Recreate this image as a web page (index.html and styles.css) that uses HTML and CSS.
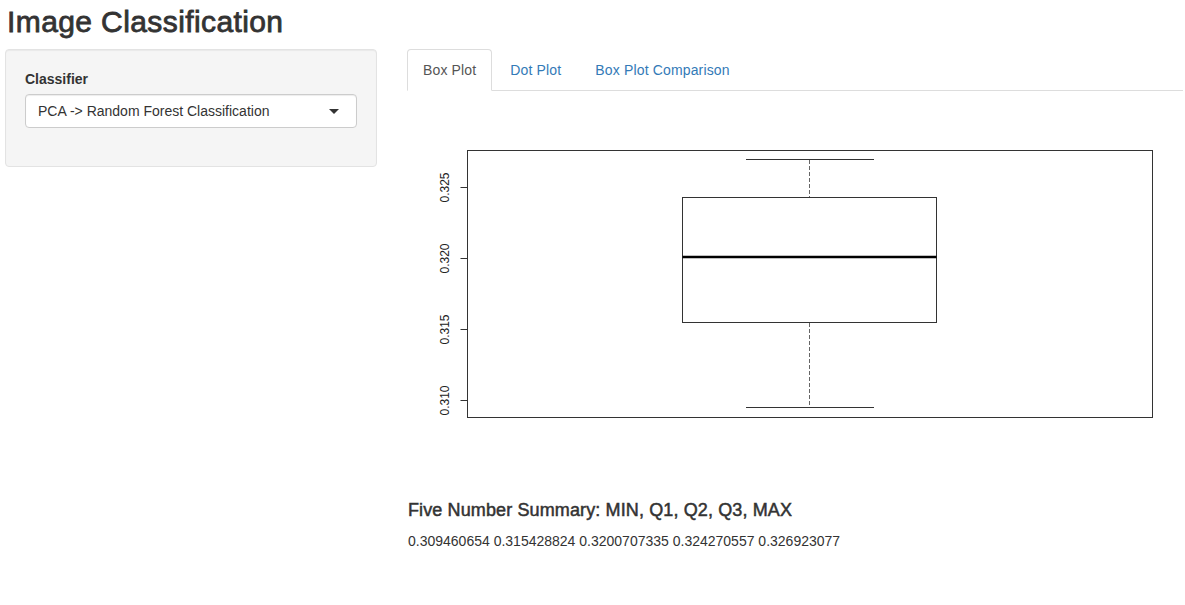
FILE: index.html
```html
<!DOCTYPE html>
<html lang="en">
<head>
<meta charset="utf-8">
<title>Image Classification</title>
<link rel="stylesheet" href="styles.css">
</head>
<body>
<div class="page">
  <h2 class="title">Image Classification</h2>
  <div class="layout">
    <aside class="well">
      <div class="form-group">
        <label class="control-label">Classifier</label>
        <div class="select">
          <span class="select-value">PCA -&gt; Random Forest Classification</span>
          <span class="caret"></span>
        </div>
      </div>
    </aside>
    <main class="main">
      <ul class="nav-tabs">
        <li class="tab active"><a>Box Plot</a></li>
        <li class="tab"><a>Dot Plot</a></li>
        <li class="tab"><a>Box Plot Comparison</a></li>
      </ul>
      <div class="tab-content">
        <svg class="plot" width="775" height="400" viewBox="0 0 775 400" xmlns="http://www.w3.org/2000/svg">
          <rect x="59.5" y="59.5" width="685" height="267" fill="none" stroke="#333" stroke-width="1"/>
          <g stroke="#333" stroke-width="1">
            <line x1="59.5" y1="96.5" x2="59.5" y2="309.5"/>
            <line x1="52.5" y1="96.5" x2="59.5" y2="96.5"/>
            <line x1="52.5" y1="167.5" x2="59.5" y2="167.5"/>
            <line x1="52.5" y1="238.5" x2="59.5" y2="238.5"/>
            <line x1="52.5" y1="309.5" x2="59.5" y2="309.5"/>
          </g>
          <g class="tick-labels" font-size="12" fill="#222" text-anchor="middle">
            <text transform="translate(41 96.5) rotate(-90)">0.325</text>
            <text transform="translate(41 167.5) rotate(-90)">0.320</text>
            <text transform="translate(41 238.5) rotate(-90)">0.315</text>
            <text transform="translate(41 309.5) rotate(-90)">0.310</text>
          </g>
          <g stroke="#666" stroke-width="1" stroke-dasharray="4 2">
            <line x1="401.5" y1="69" x2="401.5" y2="106"/>
            <line x1="401.5" y1="232" x2="401.5" y2="316"/>
          </g>
          <g stroke="#333" stroke-width="1">
            <line x1="338" y1="68.5" x2="466" y2="68.5"/>
            <line x1="338" y1="316.5" x2="466" y2="316.5"/>
            <rect x="274.5" y="106.5" width="254" height="125" fill="#fff"/>
          </g>
          <line x1="274.5" y1="166" x2="528.5" y2="166" stroke="#000" stroke-width="2.5"/>
        </svg>
        <h4 class="summary-title">Five Number Summary: MIN, Q1, Q2, Q3, MAX</h4>
        <div class="summary-values">0.309460654 0.315428824 0.3200707335 0.324270557 0.326923077</div>
      </div>
    </main>
  </div>
</div>
</body>
</html>
```
FILE: styles.css
```css
* { box-sizing: border-box; }

html, body {
  margin: 0;
  padding: 0;
  background: #fff;
}

body {
  font-family: "Liberation Sans", Helvetica, Arial, sans-serif;
  font-size: 14px;
  line-height: 20px;
  color: #333;
}

.page {
  padding: 0 3px 0 5px;
}

.title {
  margin: 5px 0 11px 2px;
  font-size: 30px;
  line-height: 33px;
  font-weight: 500;
  letter-spacing: 0.4px;
  -webkit-text-stroke: 0.8px #333;
  color: #333;
}

.layout {
  display: grid;
  grid-template-columns: 372px 1fr;
  column-gap: 31px;
  align-items: start;
}

.well {
  background: #f5f5f5;
  border: 1px solid #e3e3e3;
  border-radius: 4px;
  box-shadow: inset 0 1px 1px rgba(0, 0, 0, 0.05);
  padding: 19px;
}

.form-group {
  margin-bottom: 19px;
}

.control-label {
  display: block;
  font-weight: 700;
  margin-bottom: 5px;
  line-height: 20px;
}

.select {
  display: flex;
  align-items: center;
  justify-content: space-between;
  height: 34px;
  padding: 6px 17px 6px 12px;
  background: #fff;
  border: 1px solid #ccc;
  border-radius: 4px;
  box-shadow: inset 0 1px 1px rgba(0, 0, 0, 0.075);
}

.select-value {
  color: #333;
}

.caret {
  width: 0;
  height: 0;
  border-style: solid;
  border-width: 5px 5px 0 5px;
  border-color: #333 transparent transparent transparent;
}

.main {
  margin-left: -1px;
}

.nav-tabs {
  display: flex;
  list-style: none;
  margin: 0;
  padding: 0;
  border-bottom: 1px solid #ddd;
}

.tab {
  margin: 0 2px -1px 0;
}

.tab a {
  display: block;
  padding: 10px 15px;
  line-height: 20px;
  border: 1px solid transparent;
  border-radius: 4px 4px 0 0;
  color: #337ab7;
  letter-spacing: 0.15px;
  cursor: pointer;
}

.tab.active a {
  color: #555;
  background: #fff;
  border-color: #ddd #ddd transparent #ddd;
}

.plot {
  display: block;
  margin-left: 1px;
}

.tick-labels {
  font-family: "Liberation Sans", Helvetica, Arial, sans-serif;
}

.summary-title {
  margin: 10px 0 10px 1px;
  font-size: 18px;
  line-height: 19.8px;
  font-weight: 500;
  letter-spacing: 0.12px;
  -webkit-text-stroke: 0.5px #333;
  color: #333;
}

.summary-values {
  line-height: 20px;
  margin-left: 1px;
}
```
